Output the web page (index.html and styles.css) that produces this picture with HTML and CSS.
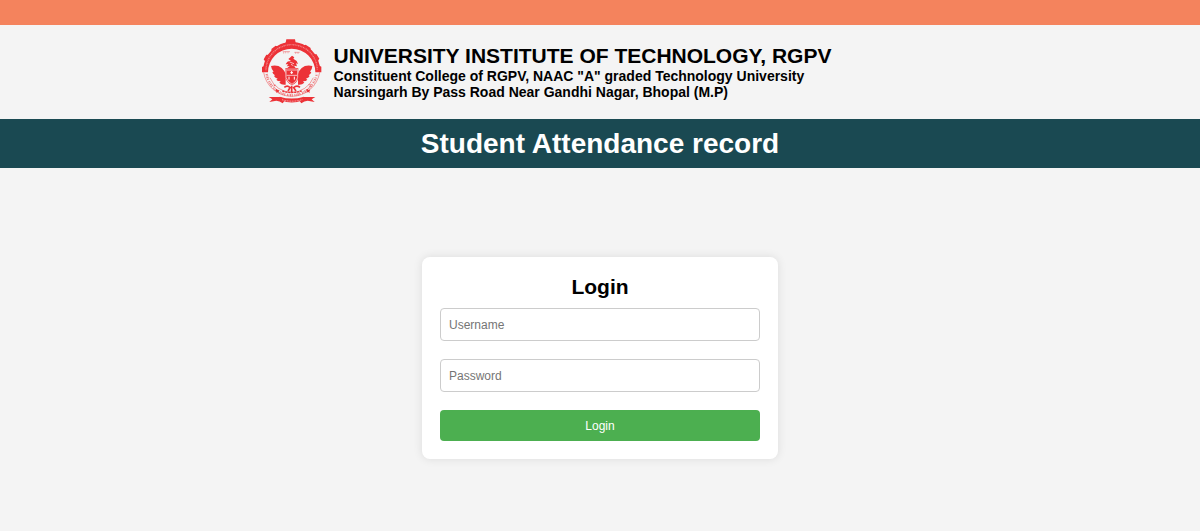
FILE: index.html
```html
<!DOCTYPE html>
<html lang="en">

<head>
    <meta charset="UTF-8">
    <meta name="viewport" content="width=device-width, initial-scale=1.0">
    <title>Student Attendance record</title>
    <link rel="stylesheet" href="styles.css">
</head>

<body>
    <div class="top-strip"></div>
    <header class="header">
        <svg class="logo" viewBox="30 27 183 195" role="img" aria-label="RGPV logo">
            <!-- gear ring -->
            <g fill="#ec3237">
                <path d="M33 127 L33 111 L41 107 L42 94 L38 88 L46 74 L55 75 L63 66 L61 57 L74 47 L82 50 L94 42 L104 38 L106 28 L132 28 L134 38 L148 42 L155 48 L164 44 L179 54 L178 63 L188 74 L196 72 L205 86 L200 94 L203 106 L211 110 L211 127 L193 127 A71 71 0 0 0 51 127 Z" />
            </g>
            <path d="M43 121 A79 79 0 0 1 201 121" fill="none" stroke="#ec3237" stroke-width="12" />
            <path d="M45 121 A77 77 0 0 1 199 121" fill="none" stroke="#fff" stroke-opacity=".4" stroke-width="4" stroke-dasharray="3 2 4 2 2 2" />
            <!-- lower ring -->
            <g fill="none" stroke="#ec3237">
                <path d="M38 127 A85 85 0 0 0 206 127" stroke-width="2" stroke-opacity=".7" />
                <path d="M57 143 A70 70 0 0 0 187 143" stroke-width="2" stroke-opacity=".7" />
                <path d="M47 132 A76 76 0 0 0 197 132" stroke-width="7" stroke-opacity=".6" stroke-dasharray="3 2 2 2 4 2 3 5" />
                <path d="M95 65 H117 M130 67 H146" stroke-width="2" stroke-opacity=".6" />
                <path d="M98 66 v5 M104 65 v5 M111 65 v5 M134 67 v5 M141 67 v5" stroke-width="2" stroke-opacity=".5" />
            </g>
            <!-- wings -->
            <g fill="#ec3237">
                <path d="M60 108 Q80 104 92 114 Q100 121 104 132 V164 Q92 166 85 158 L89 154 Q79 154 76 149 L80 146 Q71 143 69 138 L72 136 Q65 131 64 126 L68 125 Q61 117 60 108 Z" />
                <path d="M184 108 Q164 104 152 114 Q144 121 141 132 V164 Q152 166 160 158 L156 154 Q166 154 169 149 L165 146 Q174 143 176 138 L173 136 Q180 131 181 126 L177 125 Q184 117 184 108 Z" />
                <path d="M104 103 Q108 92 120 93 L112 87 Q119 81 123 77 L130 82 L127 86 L137 93 L141 102 L135 100 L138 109 L129 107 L134 114 H109 L116 108 L107 109 L112 103 Z" />
                <path d="M103 115 H142 V141 Q140 158 123 166 Q106 157 103 142 Z" />
                <path d="M77 177 L81 181 L86 180 L83 184 L85 188 L79 186 L75 188 L76 183 L73 180 Z" />
                <path d="M169 176 L173 180 L178 179 L175 184 L177 188 L171 186 L167 188 L168 182 L165 180 Z" />
            </g>
            <!-- shield details -->
            <g fill="none" stroke="#fff">
                <path d="M105 117 V142 Q108 155 123 163 Q138 155 140 142 V117" stroke-width="2" />
                <path d="M107 136 H138 M107 120 H138" stroke-width="2" />
                <path d="M122 123 V132 M118 128 H126 M114 140 V149 M130 140 V149" stroke-width="3" />
                <path d="M116 96 L129 101 M120 103 L127 107" stroke-width="2" />
            </g>
            <g fill="none" stroke="#ec3237">
                <path d="M100 172 Q109 164 117 173 L111 183 M147 172 Q137 164 128 173 L135 183 M122 167 V187" stroke-width="5" />
                <path d="M94 183 Q121 192 152 183" stroke-width="4" stroke-dasharray="7 2" />
                <path d="M67 164 L73 168 M68 170 L73 164 M172 164 H180 M174 169 H179" stroke-width="3" stroke-opacity=".5" />
            </g>
            <!-- ribbon -->
            <g fill="#ec3237">
                <path d="M53 201 H89 L102 211 L95 220 Q86 212 76 212 L55 216 L64 208 Z" />
                <path d="M193 201 H158 L144 211 L151 220 Q160 212 170 212 L191 216 L182 208 Z" />
                <path d="M86 200 Q122 211 159 200 L155 211 Q122 224 91 211 Z" />
            </g>
            <path d="M93 209 Q122 218 154 209" fill="none" stroke="#fff" stroke-opacity=".6" stroke-width="3" stroke-dasharray="3 2" />
        </svg>
        <div class="college">
            <h1 class="college-name">UNIVERSITY INSTITUTE OF TECHNOLOGY, RGPV</h1>
            <p class="college-info">Constituent College of RGPV, NAAC "A" graded Technology University</p>
            <p class="college-info">Narsingarh By Pass Road Near Gandhi Nagar, Bhopal (M.P)</p>
        </div>
    </header>
    <div class="title-bar">
        <h2 class="title">Student Attendance record</h2>
    </div>

    <main class="main">
        <form class="login-form">
            <h2 class="login-title">Login</h2>
            <input class="field" type="text" name="username" placeholder="Username" aria-label="Username" required>
            <input class="field" type="password" name="password" placeholder="Password" aria-label="Password" required>
            <button class="login-button" type="submit">Login</button>
        </form>
    </main>
</body>

</html>
```
FILE: styles.css
```css
* {
    box-sizing: border-box;
}

body {
    font-family: "Liberation Sans", Arial, sans-serif;
    background-color: #f4f4f4;
    margin: 0;
    color: #000;
}

h1,
h2,
p {
    margin: 0;
}

.top-strip {
    height: 25px;
    background-color: #f4835d;
}

.header {
    display: flex;
    justify-content: center;
    align-items: center;
    gap: 12px;
    padding: 14px 108px 15px 0;
}

.logo {
    width: 61px;
    height: 65px;
    flex-shrink: 0;
}

.college-name {
    font-size: 21px;
    line-height: 24px;
}

.college-info {
    font-size: 14px;
    line-height: 16px;
    font-weight: bold;
}

.title-bar {
    background-color: #1a4952;
    padding: 8px;
    text-align: center;
}

.title {
    color: #fff;
    font-size: 28px;
    line-height: 33px;
}

.main {
    display: flex;
    justify-content: center;
    padding: 89px 16px 32px;
}

.login-form {
    display: flex;
    flex-direction: column;
    gap: 18px;
    width: 100%;
    max-width: 356px;
    padding: 18px;
    background-color: #fff;
    border-radius: 8px;
    box-shadow: 0 0 10px rgba(0, 0, 0, 0.1);
}

.login-title {
    font-size: 21px;
    line-height: 24px;
    margin-bottom: -9px;
    text-align: center;
}

.field {
    width: 100%;
    height: 33px;
    padding: 8px;
    font-family: inherit;
    font-size: 12px;
    border: 1px solid #ccc;
    border-radius: 4px;
}

.login-button {
    height: 31px;
    padding: 8px;
    font-family: inherit;
    font-size: 12px;
    color: #fff;
    background-color: #4caf50;
    border: none;
    border-radius: 4px;
    cursor: pointer;
}

.login-button:hover {
    background-color: #45a049;
}
```
